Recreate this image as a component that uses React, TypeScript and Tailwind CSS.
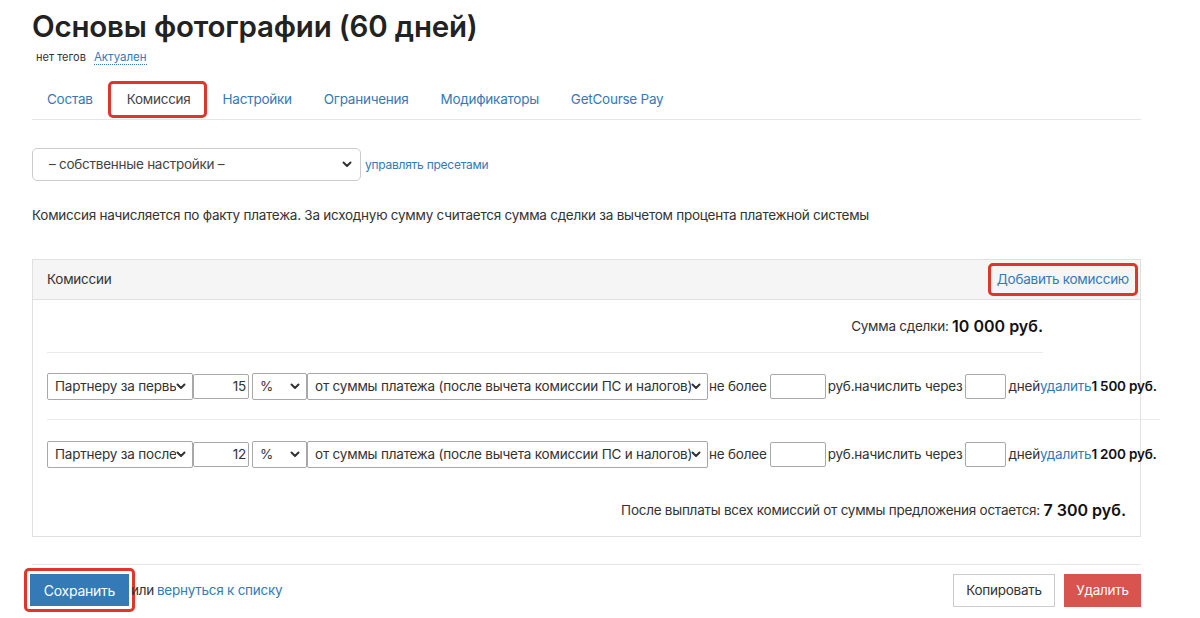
import React from "react";

const Chev = () => (
  <svg width="10" height="7" viewBox="0 0 10 7" className="shrink-0">
    <path d="M1.5 1.5 L5 5 L8.5 1.5" fill="none" stroke="#333" strokeWidth="2" strokeLinecap="round" strokeLinejoin="round" />
  </svg>
);

function Sel({ w, text }: { w: string; text: string }) {
  return (
    <div className={`${w} h-[27px] border border-[#a8a8a8] rounded-[2px] flex items-center pl-[7px] pr-[6px] bg-white shrink-0`}>
      <span className="flex-1 whitespace-nowrap overflow-hidden">{text}</span>
      <Chev />
    </div>
  );
}

function Inp({ w, val }: { w: string; val?: string }) {
  return (
    <div className={`${w} h-[25px] border border-[#a8a8a8] rounded-[2px] bg-white flex items-center justify-end pr-[2px] shrink-0`}>
      {val}
    </div>
  );
}

function Row({ who, pct, sum }: { who: string; pct: string; sum: string }) {
  return (
    <div className="flex items-center h-[27px] whitespace-nowrap text-[13.5px] tracking-[-0.2px] text-[#333]">
      <Sel w="w-[146px] min-w-[146px]" text={who} />
      <Inp w="w-[56px] min-w-[56px]" val={pct} />
      <div className="w-[3px] shrink-0" />
      <Sel w="w-[55px] min-w-[55px]" text="%" />
      <Sel w="w-[401px] min-w-[401px]" text="от суммы платежа (после вычета комиссии ПС и налогов)" />
      <span className="ml-[1px] shrink-0">не более</span>
      <div className="w-[3px] shrink-0" />
      <Inp w="w-[56px] min-w-[56px]" />
      <span className="ml-[2px] shrink-0">руб.начислить через</span>
      <div className="w-[3px] shrink-0" />
      <Inp w="w-[41px] min-w-[41px]" />
      <span className="ml-[2px] shrink-0">дней</span>
      <span className="text-[#337ab7] shrink-0">удалить</span>
      <span className="font-semibold text-[#111] shrink-0">{sum}</span>
    </div>
  );
}

export default function App() {
  return (
    <div className="w-[1200px] h-[618px] bg-white overflow-hidden text-[#333] text-[13.5px] tracking-[-0.25px]" style={{ fontFamily: "Inter, 'Noto Sans', sans-serif" }}>
      <div className="ml-[32px] w-[1109px]">
        <h1 className="text-[29.5px] leading-[36px] font-semibold text-[#222] pt-[8px] tracking-[-0.2px]">Основы фотографии (60 дней)</h1>
        <div className="flex items-center mt-[4px] ml-[4px] h-[18px] tracking-normal">
          <span className="text-[11px] text-[#333]">нет тегов</span>
          <span className="text-[11.5px] text-[#337ab7] ml-[8px] border-b border-dotted border-[#337ab7] leading-[14px]">Актуален</span>
        </div>
        <div className="flex mt-[14px] border-b border-[#e5e5e5] h-[40px] items-end pb-[1px]">
          {["Состав", "Комиссия", "Настройки", "Ограничения", "Модификаторы", "GetCourse Pay"].map((t, i) =>
            i === 1 ? (
              <div key={t} className="h-[37px] -ml-[2px] pl-[16px] pr-[13px] flex items-center border-[3px] border-[#e0352b] rounded-[5px] text-[#444] mr-[1px]">
                {t}
              </div>
            ) : (
              <div key={t} className="h-[37px] px-[15px] flex items-center text-[#337ab7] mr-[2px]">
                {t}
              </div>
            )
          )}
        </div>
        <div className="flex items-center mt-[28px]">
          <div className="w-[329px] h-[33px] border border-[#ccc] rounded-[5px] flex items-center pl-[16px] pr-[8px] text-[#444]">
            <span className="flex-1">– собственные настройки –</span>
            <Chev />
          </div>
          <span className="text-[12px] text-[#337ab7] ml-[4px]">управлять пресетами</span>
        </div>
        <p className="text-[#333] mt-[24px] leading-[20px]">
          Комиссия начисляется по факту платежа. За исходную сумму считается сумма сделки за вычетом процента платежной системы
        </p>
        <div className="mt-[34px] border border-[#e0e0e0] h-[278px]">
          <div className="h-[40px] bg-[#f5f5f5] border-b border-[#e0e0e0] flex items-center justify-between pl-[14px] pr-[2px]">
            <span className="text-[#333]">Комиссии</span>
            <div className="h-[33px] px-[6px] border-[3px] border-[#e0352b] rounded-[5px] flex items-center text-[#337ab7]">
              Добавить комиссию
            </div>
          </div>
          <div className="pl-[14px]">
            <div className="w-[996px] flex justify-end items-center h-[53px] border-b border-[#ebebeb]">
              <span>Сумма сделки:&nbsp;</span>
              <span className="text-[16px] font-semibold text-[#111] tracking-normal">10 000 руб.</span>
            </div>
            <div className="w-[1113px] pt-[20px] pb-[19px] border-b border-[#ebebeb]">
              <Row who="Партнеру за первый" pct="15" sum="1 500 руб." />
            </div>
            <div className="w-[1113px] pt-[21px]">
              <Row who="Партнеру за последний" pct="12" sum="1 200 руб." />
            </div>
            <div className="flex justify-end items-center pr-[14px] mt-[30px]">
              <span>После выплаты всех комиссий от суммы предложения остается:&nbsp;</span>
              <span className="text-[16px] font-semibold text-[#111] tracking-normal">7 300 руб.</span>
            </div>
          </div>
        </div>
        <div className="mt-[27px] border-t border-[#e5e5e5] pt-[3px] flex items-center justify-between">
          <div className="flex items-center -ml-[8px]">
            <div className="border-[3px] border-[#e0352b] rounded-[5px] p-[3px]">
              <div className="w-[99px] h-[32px] bg-[#337ab7] text-white text-[14px] flex items-center justify-center">Сохранить</div>
            </div>
            <span className="ml-[-4px]">или</span>
            <span className="text-[#337ab7] ml-[3px]">вернуться к списку</span>
          </div>
          <div className="flex items-center gap-[9px]">
            <div className="w-[102px] h-[33px] border border-[#ccc] flex items-center justify-center text-[#333]">Копировать</div>
            <div className="w-[77px] h-[33px] bg-[#d9534f] flex items-center justify-center text-white">Удалить</div>
          </div>
        </div>
      </div>
    </div>
  );
}
